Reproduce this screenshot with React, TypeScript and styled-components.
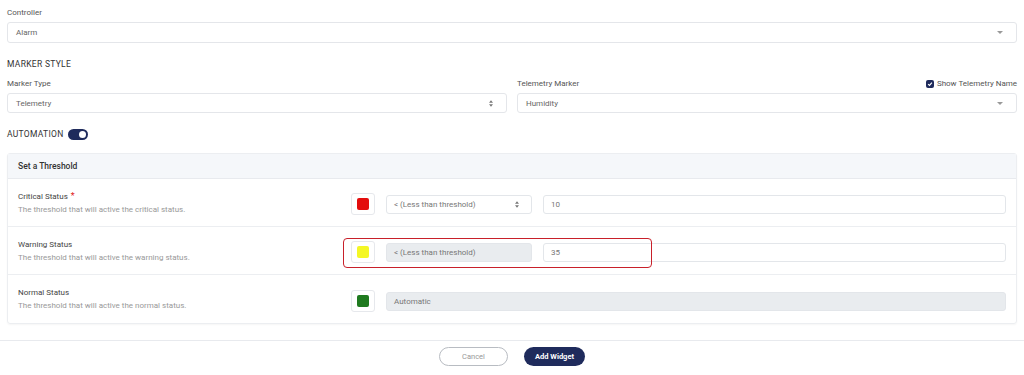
import React from "react";
import styled, { createGlobalStyle } from "styled-components";

const GlobalStyle = createGlobalStyle`
  html, body {
    margin: 0;
    padding: 0;
    background: #fff;
  }
  body {
    font-family: Roboto, "Liberation Sans", Arial, sans-serif;
    color: #444;
  }
  * {
    box-sizing: border-box;
  }
`;

const STATUSES = [
  {
    key: "critical",
    title: "Critical Status",
    desc: "The threshold that will active the critical status.",
    color: "#e30d0d",
    required: true,
    mode: "select",
    value: "10",
  },
  {
    key: "warning",
    title: "Warning Status",
    desc: "The threshold that will active the warning status.",
    color: "#f4f725",
    required: false,
    mode: "locked",
    value: "35",
  },
  {
    key: "normal",
    title: "Normal Status",
    desc: "The threshold that will active the normal status.",
    color: "#1f7a1f",
    required: false,
    mode: "auto",
    value: "",
  },
];

const Caret = () => (
  <svg width="6" height="3" viewBox="0 0 6 3">
    <path d="M0 0 L6 0 L3 3 Z" fill="#999" />
  </svg>
);

const UpDown = () => (
  <svg width="4" height="7" viewBox="0 0 4 7">
    <path d="M0 2.8 L4 2.8 L2 0.2 Z" fill="#777" />
    <path d="M0 4.2 L4 4.2 L2 6.8 Z" fill="#777" />
  </svg>
);

const App = () => {
  return (
    <Page>
      <GlobalStyle />
      <Label>Controller</Label>
      <Select $h={21}>
        <span>Alarm</span>
        <Caret />
      </Select>

      <SectionTitle>MARKER STYLE</SectionTitle>
      <TwoCols>
        <div>
          <Label>Marker Type</Label>
          <Select $h={20}>
            <span>Telemetry</span>
            <UpDown />
          </Select>
        </div>
        <div>
          <LabelRow>
            <Label>Telemetry Marker</Label>
            <CheckLabel>
              <CheckBox>
                <svg width="6" height="6" viewBox="0 0 6 6">
                  <path d="M1.1 3.1 L2.5 4.4 L4.9 1.6" stroke="#fff" strokeWidth="1.1" fill="none" />
                </svg>
              </CheckBox>
              Show Telemetry Name
            </CheckLabel>
          </LabelRow>
          <Select $h={20}>
            <span>Humidity</span>
            <Caret />
          </Select>
        </div>
      </TwoCols>

      <AutomationRow>
        <SectionTitle as="span" $flat>AUTOMATION</SectionTitle>
        <Toggle>
          <Knob />
        </Toggle>
      </AutomationRow>

      <Panel>
        <PanelHeader>Set a Threshold</PanelHeader>
        {STATUSES.map((s) => (
          <StatusRow key={s.key}>
            <Info>
              <StatusTitle>
                {s.title}
                {s.required && <Required>*</Required>}
              </StatusTitle>
              <StatusDesc>{s.desc}</StatusDesc>
            </Info>
            <Swatch>
              <SwatchColor $color={s.color} />
            </Swatch>
            {s.mode === "auto" ? (
              <Input $disabled $wide>Automatic</Input>
            ) : (
              <>
                <Input $disabled={s.mode === "locked"}>
                  <span>&lt; (Less than threshold)</span>
                  {s.mode === "select" && <UpDown />}
                </Input>
                <Input>{s.value}</Input>
              </>
            )}
            {s.key === "warning" && <Highlight />}
          </StatusRow>
        ))}
      </Panel>

      <Footer>
        <GhostButton>Cancel</GhostButton>
        <PrimaryButton>Add Widget</PrimaryButton>
      </Footer>
    </Page>
  );
};

const Page = styled.div`
  width: 1024px;
  height: 375px;
  padding: 7px 7px 0;
  overflow: hidden;
  font-size: 8px;
`;

const Label = styled.div`
  font-size: 8px;
  line-height: 11px;
  color: #555;
  margin-bottom: 4px;
`;

const LabelRow = styled.div`
  display: flex;
  justify-content: space-between;
  align-items: flex-start;
`;

const Select = styled.div<{ $h: number }>`
  height: ${(p) => p.$h}px;
  border: 1px solid #e4e6ea;
  border-radius: 3px;
  display: flex;
  align-items: center;
  justify-content: space-between;
  padding: 0 13px 0 8px;
  color: #666;
  font-size: 8px;
  background: #fff;
`;

const SectionTitle = styled.div<{ $flat?: boolean }>`
  font-size: 8.5px;
  line-height: 12px;
  color: #333;
  letter-spacing: 0.3px;
  margin: ${(p) => (p.$flat ? "0" : "15px 0 8px")};
`;

const TwoCols = styled.div`
  display: grid;
  grid-template-columns: 500px 500px;
  gap: 10px;
`;

const CheckLabel = styled.div`
  display: flex;
  align-items: center;
  gap: 3px;
  font-size: 8px;
  line-height: 11px;
  color: #555;
`;

const CheckBox = styled.span`
  width: 8px;
  height: 8px;
  border-radius: 2px;
  background: #1f2b5c;
  display: inline-flex;
  align-items: center;
  justify-content: center;
`;

const AutomationRow = styled.div`
  display: flex;
  align-items: center;
  gap: 4px;
  margin-top: 15px;
  height: 12px;
`;

const Toggle = styled.span`
  width: 20px;
  height: 11px;
  border-radius: 6px;
  background: #1f2b5c;
  position: relative;
  display: inline-block;
`;

const Knob = styled.span`
  position: absolute;
  right: 2px;
  top: 2px;
  width: 7px;
  height: 7px;
  border-radius: 50%;
  background: #fff;
`;

const Panel = styled.div`
  margin-top: 13px;
  border: 1px solid #eceef1;
  border-radius: 3px;
  box-shadow: 0 1px 2px rgba(0, 0, 0, 0.04);
`;

const PanelHeader = styled.div`
  height: 25px;
  background: #f5f7fa;
  border-bottom: 1px solid #e8eaee;
  padding: 0 10px;
  display: flex;
  align-items: center;
  font-size: 8.5px;
  font-weight: 500;
  color: #333;
`;

const StatusRow = styled.div`
  position: relative;
  height: 48px;
  display: grid;
  grid-template-columns: 322px 24px 146px 1fr;
  column-gap: 11px;
  align-items: center;
  padding: 0 10px 0 10px;
  border-bottom: 1px solid #eceef1;
  &:last-child {
    border-bottom: none;
  }
`;

const Info = styled.div`
  display: flex;
  flex-direction: column;
  gap: 2px;
`;

const StatusTitle = styled.div`
  font-size: 8px;
  line-height: 11px;
  color: #444;
`;

const Required = styled.span`
  color: #e02020;
  margin-left: 3px;
  font-size: 9px;
`;

const StatusDesc = styled.div`
  font-size: 8px;
  line-height: 11px;
  color: #999;
`;

const Swatch = styled.div`
  width: 24px;
  height: 22px;
  margin-top: 3px;
  border: 1px solid #e6e8ec;
  border-radius: 3px;
  display: flex;
  align-items: center;
  justify-content: center;
  background: #fff;
`;

const SwatchColor = styled.span<{ $color: string }>`
  width: 12px;
  height: 12px;
  border-radius: 2px;
  background: ${(p) => p.$color};
`;

const Input = styled.div<{ $disabled?: boolean; $wide?: boolean }>`
  height: 19px;
  margin-top: 4px;
  border: 1px solid #e3e6ea;
  background: ${(p) => (p.$disabled ? "#e9ecef" : "#fff")};
  border-radius: 3px;
  display: flex;
  align-items: center;
  justify-content: space-between;
  padding: 0 12px 0 7px;
  color: #777;
  font-size: 8px;
  ${(p) => (p.$wide ? "grid-column: 3 / 5;" : "")}
`;

const Highlight = styled.div`
  position: absolute;
  left: 335px;
  top: 11px;
  width: 309px;
  height: 30px;
  border: 1.5px solid #c8202a;
  border-radius: 4px;
  pointer-events: none;
`;

const Footer = styled.div`
  margin-top: 16px;
  margin-left: -7px;
  margin-right: -7px;
  border-top: 1px solid #e8eaee;
  padding-top: 6px;
  display: flex;
  justify-content: center;
  gap: 16px;
`;

const GhostButton = styled.button`
  width: 69px;
  height: 19px;
  border-radius: 10px;
  border: 1px solid #b8bcc2;
  background: #fff;
  color: #999;
  font-family: Roboto, "Liberation Sans", Arial, sans-serif;
  font-size: 7.5px;
  padding: 0;
`;

const PrimaryButton = styled.button`
  width: 61px;
  height: 19px;
  border-radius: 10px;
  border: none;
  background: #1f2b5c;
  color: #fff;
  font-family: Roboto, "Liberation Sans", Arial, sans-serif;
  font-size: 7.5px;
  font-weight: 700;
  padding: 0;
`;

export default App;
